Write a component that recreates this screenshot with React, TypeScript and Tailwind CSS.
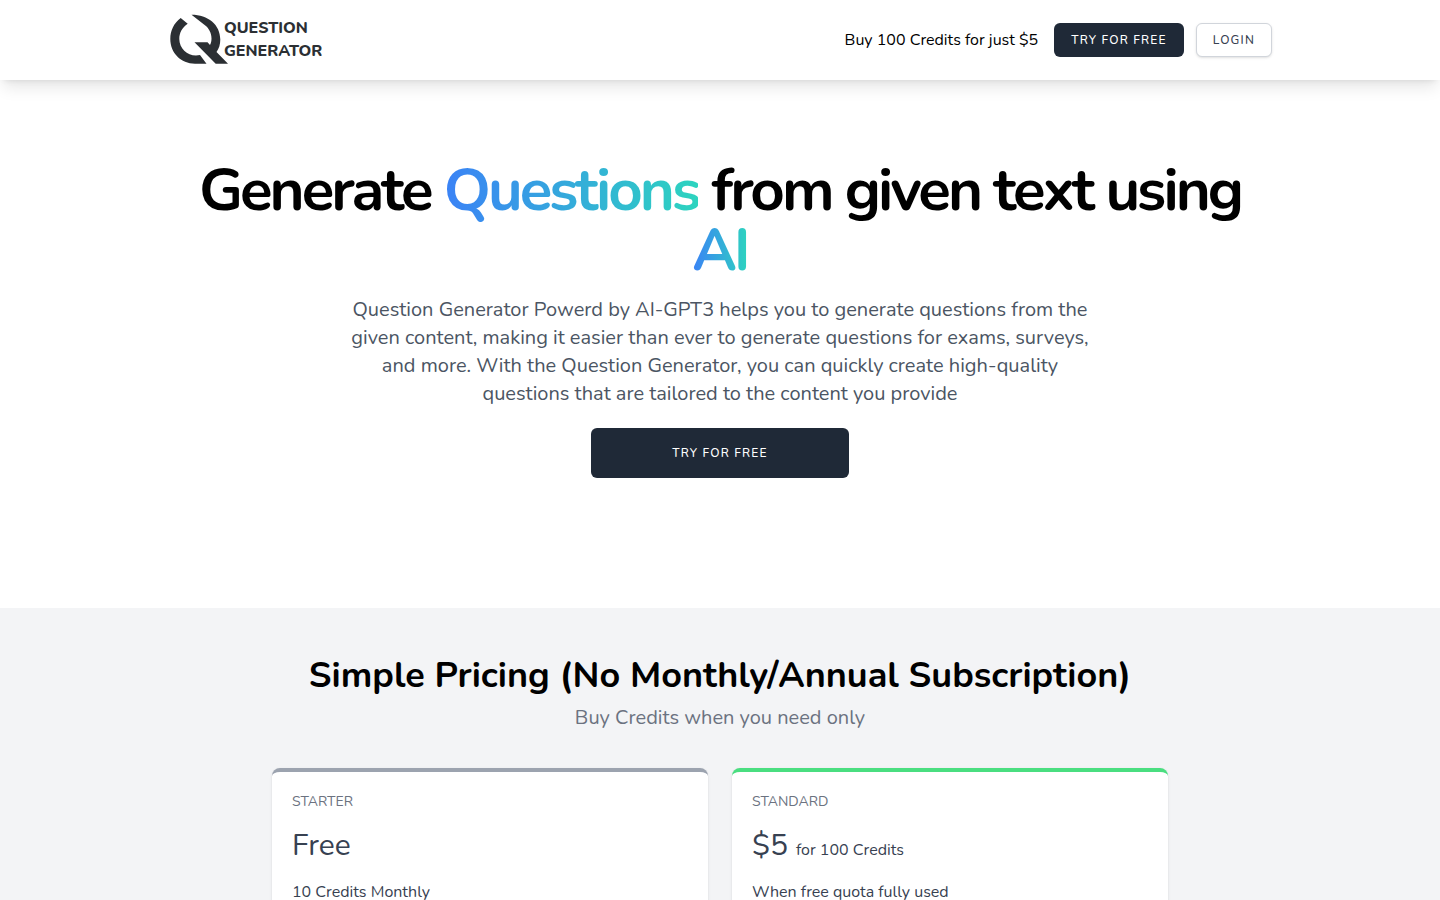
const plans = [
  { name: "Starter", price: "Free", unit: "", note: "10 Credits Monthly", accent: "border-[#9ca3af]" },
  { name: "Standard", price: "$5", unit: "for 100 Credits", note: "When free quota fully used", accent: "border-[#4ade80]" },
];

const button =
  "inline-flex items-center justify-center rounded-md border px-4 py-2 text-xs leading-4 font-medium uppercase tracking-widest";

function Logo() {
  return (
    <a href="/" aria-label="Question Generator" className="block">
      <svg viewBox="0 0 160 52" className="h-[52px] w-40" fill="#2b2f33">
        <path d="M12.700 4 L19.700 9.700 C14 13.500 11.300 19 11.300 25 C11.300 34 19 41.500 28 41.500 L32 41 L38.500 49.700 L27 49.700 C13 49.700 2.300 39 2.300 25 C2.300 16.500 6 9 12.700 4 Z" />
        <path d="M23.500 0.700 C40 0.700 52.300 10.500 52.300 25.500 C52.300 30.500 51 34.700 48.500 38 L60 49.700 L47.700 49.700 L26.500 28.300 L39.500 28.300 L42 31 C43 29 43.500 27 43.500 24.500 C43.500 18.500 40.500 13.500 36 10.500 Z" />
        <g fontFamily="Nunito, Lato, sans-serif" fontWeight="800" fontSize="16">
          <text x="56" y="19">QUESTION</text>
          <text x="56" y="42">GENERATOR</text>
        </g>
      </svg>
    </a>
  );
}

function Gradient({ children }: { children: string }) {
  return (
    <span className="bg-linear-to-r/srgb from-[#3b82f6] to-[#2dd4bf] bg-clip-text text-transparent">{children}</span>
  );
}

export default function App() {
  return (
    <div className="min-h-screen bg-white font-[Nunito,Lato,sans-serif] text-black">
      <header className="relative shadow-lg">
        <div className="mx-auto flex h-20 max-w-6xl items-center justify-between px-6">
          <Logo />
          <div className="flex items-center">
            <span className="mr-4">Buy 100 Credits for just $5</span>
            <button className={`${button} mr-3 border-transparent bg-[#1f2937] text-white`}>Try for free</button>
            <button className={`${button} border-[#d1d5db] bg-white text-[#374151] shadow-sm`}>Login</button>
          </div>
        </div>
      </header>

      <main>
        <section className="mx-auto max-w-6xl px-6 pt-20 pb-[130px] text-center">
          <h1 className="mb-4 text-6xl leading-none font-bold tracking-tighter">
            Generate <Gradient>Questions</Gradient> from given text using <Gradient>AI</Gradient>
          </h1>
          <p className="mx-auto mb-5 max-w-3xl text-xl leading-7 text-[#4b5563]">
            Question Generator Powerd by AI-GPT3 helps you to generate questions from the given content, making it
            easier than ever to generate questions for exams, surveys, and more. With the Question Generator, you can
            quickly create high-quality questions that are tailored to the content you provide
          </p>
          <button className={`${button} h-[50px] w-[258px] border-transparent bg-[#1f2937] text-white`}>
            Try for free
          </button>
        </section>

        <section className="bg-[#f3f4f6] px-6 pt-12 pb-16">
          <div className="mx-auto max-w-4xl">
            <h2 className="text-center text-4xl leading-10 font-bold">
              Simple Pricing (No Monthly/Annual Subscription)
            </h2>
            <p className="mt-2 mb-9 text-center text-xl leading-7 text-[#6b7280]">Buy Credits when you need only</p>
            <div className="grid grid-cols-2 gap-6">
              {plans.map((plan) => (
                <article key={plan.name} className={`rounded-lg border-t-4 bg-white p-5 text-[#374151] shadow-sm ${plan.accent}`}>
                  <h3 className="text-sm leading-5 text-[#6b7280] uppercase">{plan.name}</h3>
                  <p className="mt-4 flex items-baseline gap-2 text-3xl leading-9">
                    {plan.price}
                    {plan.unit && <span className="text-base">{plan.unit}</span>}
                  </p>
                  <p className="mt-4 leading-6">{plan.note}</p>
                </article>
              ))}
            </div>
          </div>
        </section>
      </main>
    </div>
  );
}
